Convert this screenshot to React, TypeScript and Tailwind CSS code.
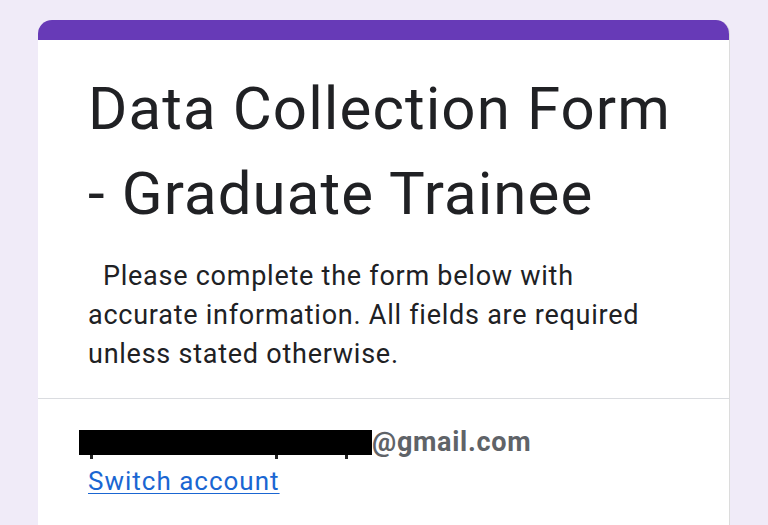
export default function App() {
  return (
    <div className="min-h-screen bg-[#f0ebf8] pt-5 pl-[38px] font-['Roboto',sans-serif]">
      <div className="w-[692px] bg-white rounded-t-[14px] overflow-hidden border-r border-[#dcdcdc]">
        <div className="h-5 bg-[#673ab7]" />
        <div className="pl-[50px] pr-[40px] pt-[26px] pb-[24px]">
          <h1 className="text-[60px] leading-[85px] tracking-[1.1px] text-[#202124] font-normal">
            Data Collection Form - Graduate Trainee
          </h1>
          <p className="mt-[21px] text-[27px] leading-[39px] tracking-[0.75px] text-[#202124] whitespace-pre-wrap">
            {"  Please complete the form below with\naccurate information. All fields are required\nunless stated otherwise."}
          </p>
        </div>
        <div className="h-px bg-[#dadce0]" />
        <div className="pl-[50px] pt-[25px] pb-8">
          <div className="flex items-center h-[37px]">
            <div className="relative -ml-[9px] w-[293px] h-[25px] bg-black">
              <span className="absolute left-[11px] -bottom-[4px] w-[3px] h-[4px] bg-[#222]" />
              <span className="absolute left-[196px] -bottom-[4px] w-[3px] h-[4px] bg-[#222]" />
              <span className="absolute left-[266px] -bottom-[4px] w-[3px] h-[4px] bg-[#222]" />
            </div>
            <span className="text-[27px] font-bold tracking-[0.7px] text-[#5f6368]">@gmail.com</span>
          </div>
          <a href="#" className="block w-max mt-[2px] text-[26px] leading-[37px] tracking-[1px] text-[#1a66d2] underline underline-offset-[3px] decoration-1">
            Switch account
          </a>
        </div>
      </div>
    </div>
  );
}
